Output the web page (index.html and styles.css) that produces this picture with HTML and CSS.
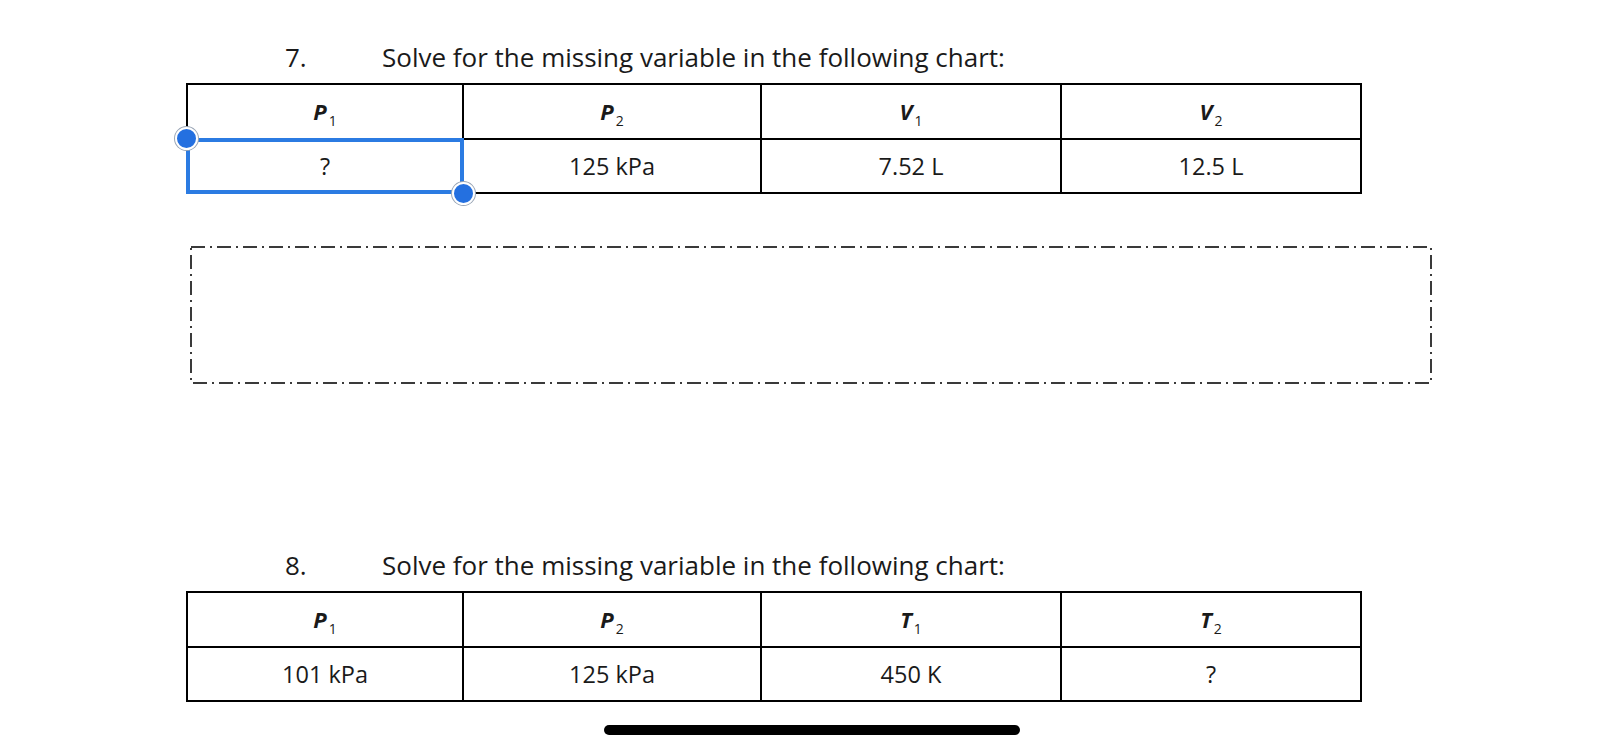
FILE: index.html
```html
<!DOCTYPE html>
<html>
<head>
<meta charset="utf-8">
<link rel="stylesheet" href="styles.css">
</head>
<body>
<div class="page">
  <section class="q q7">
    <div class="qtitle"><span class="num">7.</span><span class="text">Solve for the missing variable in the following chart:</span></div>
    <table class="chart">
      <colgroup><col class="c1"><col class="c2"><col class="c3"><col class="c4"></colgroup>
      <tr class="head">
        <td><i>P</i><sub>1</sub></td>
        <td><i>P</i><sub>2</sub></td>
        <td><i>V</i><sub>1</sub></td>
        <td><i>V</i><sub>2</sub></td>
      </tr>
      <tr class="body">
        <td class="selected">?
          <div class="sel"><span class="handle tl"></span><span class="handle br"></span></div>
        </td>
        <td>125 kPa</td>
        <td>7.52 L</td>
        <td>12.5 L</td>
      </tr>
    </table>
  </section>

  <svg class="answer-box" width="1242" height="138" viewBox="0 0 1242 138">
    <rect x="1" y="1" width="1240" height="136" fill="none" stroke="#3a3a3a" stroke-width="2" stroke-dasharray="14 5 2 5"></rect>
  </svg>

  <section class="q q8">
    <div class="qtitle"><span class="num">8.</span><span class="text">Solve for the missing variable in the following chart:</span></div>
    <table class="chart">
      <colgroup><col class="c1"><col class="c2"><col class="c3"><col class="c4"></colgroup>
      <tr class="head">
        <td><i>P</i><sub>1</sub></td>
        <td><i>P</i><sub>2</sub></td>
        <td><i>T</i><sub>1</sub></td>
        <td><i>T</i><sub>2</sub></td>
      </tr>
      <tr class="body">
        <td>101 kPa</td>
        <td>125 kPa</td>
        <td>450 K</td>
        <td>?</td>
      </tr>
    </table>
  </section>

  <div class="home-bar"></div>
</div>
</body>
</html>
```

FILE: styles.css
```css
html, body {
  margin: 0;
  padding: 0;
  background: #fff;
}
.page {
  width: 1624px;
  height: 750px;
  overflow: hidden;
  padding-top: 41px;
  box-sizing: border-box;
  font-family: "Open Sans", Lato, sans-serif;
  color: #1a1a1a;
  display: flex;
  flex-direction: column;
}
.q {
  margin-left: 186px;
}
.q8 {
  margin-top: 165px;
}
.qtitle {
  display: flex;
  height: 32px;
  line-height: 32px;
  font-size: 26px;
  padding-left: 99px;
  margin-bottom: 10px;
}
.qtitle .num {
  width: 97px;
}
.chart {
  border-collapse: collapse;
  table-layout: fixed;
  width: 1174px;
  font-size: 23.5px;
}
.chart col.c1 { width: 276px; }
.chart col.c2 { width: 298px; }
.chart col.c3 { width: 300px; }
.chart col.c4 { width: 300px; }
.chart td {
  border: 2px solid #000;
  height: 52.5px;
  padding: 0;
  text-align: center;
  vertical-align: middle;
}
.chart .head td {
  font-size: 22px;
}
.chart .head i {
  font-style: italic;
  font-weight: 700;
}
.chart .head sub {
  font-size: 14px;
  font-weight: 400;
  vertical-align: -6px;
  line-height: 0;
  margin-left: 2px;
}
.selected {
  position: relative;
}
.sel {
  position: absolute;
  left: -2px;
  top: -2px;
  right: -2px;
  bottom: -2px;
  border: 4px solid #2b7be2;
}
.handle {
  position: absolute;
  width: 19px;
  height: 19px;
  border-radius: 50%;
  background: #2470e0;
  border: 2px solid #fff;
  box-shadow: 0 0 0 1px #9aa6b6;
}
.handle.tl {
  left: -15px;
  top: -15px;
}
.handle.br {
  right: -15px;
  bottom: -15px;
}
.answer-box {
  display: block;
  margin-left: 190px;
  margin-top: 52px;
}
.home-bar {
  margin-left: 604px;
  margin-top: 23px;
  width: 416px;
  height: 10px;
  border-radius: 5px;
  background: #000;
}
```
